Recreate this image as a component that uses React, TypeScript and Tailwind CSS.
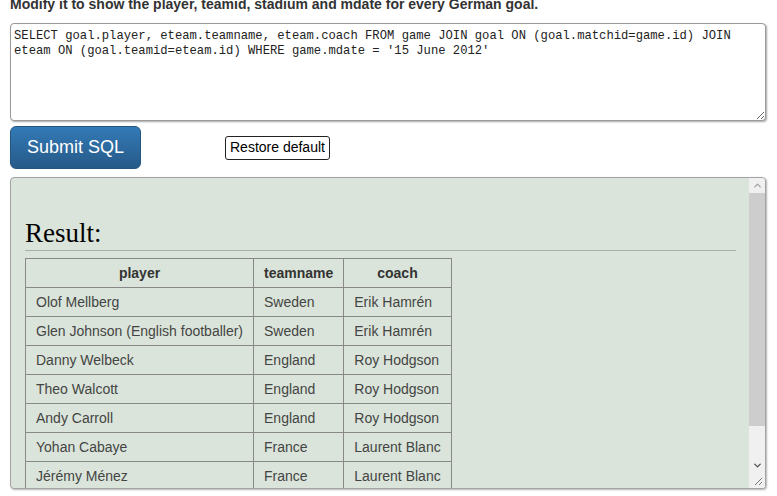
import { ChevronUp, ChevronDown } from 'lucide-react';

const rows = [
  { player: 'Olof Mellberg', team: 'Sweden', coach: 'Erik Hamrén' },
  { player: 'Glen Johnson (English footballer)', team: 'Sweden', coach: 'Erik Hamrén' },
  { player: 'Danny Welbeck', team: 'England', coach: 'Roy Hodgson' },
  { player: 'Theo Walcott', team: 'England', coach: 'Roy Hodgson' },
  { player: 'Andy Carroll', team: 'England', coach: 'Roy Hodgson' },
  { player: 'Yohan Cabaye', team: 'France', coach: 'Laurent Blanc' },
  { player: 'Jérémy Ménez', team: 'France', coach: 'Laurent Blanc' },
  { player: 'Theo Walcott', team: 'England', coach: 'Roy Hodgson' },
];

const sql =
  "SELECT goal.player, eteam.teamname, eteam.coach FROM game JOIN goal ON (goal.matchid=game.id) JOIN eteam ON (goal.teamid=eteam.id) WHERE game.mdate = '15 June 2012'";

export default function App() {
  return (
    <div className="h-[496px] overflow-hidden bg-white pl-[10px] pr-[11px] font-['Liberation_Sans',Arial,sans-serif]">
      <p className="-mt-[4px] mb-[11px] text-[14px] font-bold leading-[16px] text-[#333]">
        Modify it to show the player, teamid, stadium and mdate for every German goal.
      </p>

      <textarea
        readOnly
        defaultValue={sql}
        className="block h-[98px] w-full resize-y rounded-[4px] border border-[#9a9a9a] bg-white px-[3px] pt-[5px] font-['Liberation_Mono',monospace] text-[12.2px] leading-[15px] text-[#222] shadow-[1px_1px_2px_rgba(0,0,0,0.35)] outline-none"
      />

      <div className="mt-[5px] flex items-center">
        <button className="h-[43px] w-[131px] rounded-[6px] border border-[#245580] bg-gradient-to-b from-[#337ab7] to-[#265a88] text-[18px] text-white">
          Submit SQL
        </button>
        <button className="ml-[84px] h-[24px] rounded-[3px] border border-[#222] bg-white px-[4px] text-[14px] text-black">
          Restore default
        </button>
      </div>

      <div className="mt-[8px] flex h-[312px] overflow-hidden rounded-[4px] border border-[#a3a3a3] bg-[#dae4da] shadow-[1px_1px_2px_rgba(0,0,0,0.3)]">
        <div className="flex-1 overflow-hidden pl-[14px] pr-[13px] pt-[40px]">
          <h2 className="border-b border-[#a8adad] pb-[1px] font-['Liberation_Serif',Georgia,serif] text-[27px] leading-[31px] text-black">
            Result:
          </h2>
          <table className="mt-[7px] border-collapse whitespace-nowrap text-[14px] text-[#444]">
            <thead>
              <tr className="h-[29px]">
                <th className="w-[227px] border border-[#888] px-[10px] text-center font-bold text-[#333]">player</th>
                <th className="w-[87px] border border-[#888] px-[10px] text-center font-bold text-[#333]">teamname</th>
                <th className="w-[106px] border border-[#888] px-[10px] text-center font-bold text-[#333]">coach</th>
              </tr>
            </thead>
            <tbody>
              {rows.map((r, i) => (
                <tr key={i} className="h-[29px]">
                  <td className="border border-[#888] px-[10px]">{r.player}</td>
                  <td className="border border-[#888] px-[10px]">{r.team}</td>
                  <td className="border border-[#888] px-[10px]">{r.coach}</td>
                </tr>
              ))}
            </tbody>
          </table>
        </div>

        {/* scrollbar */}
        <div className="flex w-[16px] flex-col bg-[#f0f0f0]">
          <div className="flex h-[15px] items-center justify-center text-[#a3a3a3]">
            <ChevronUp size={11} strokeWidth={3} />
          </div>
          <div className="h-[233px] bg-[#cdcdcd]" />
          <div className="flex-1" />
          <div className="flex h-[14px] items-center justify-center text-[#505050]">
            <ChevronDown size={11} strokeWidth={3} />
          </div>
          <div className="relative h-[16px] bg-[#f0f0f0]">
            <svg width="16" height="16" className="absolute inset-0">
              <line x1="13" y1="6" x2="6" y2="13" stroke="#777" strokeWidth="1" />
              <line x1="13" y1="10" x2="10" y2="13" stroke="#777" strokeWidth="1" />
            </svg>
          </div>
        </div>
      </div>
    </div>
  );
}
